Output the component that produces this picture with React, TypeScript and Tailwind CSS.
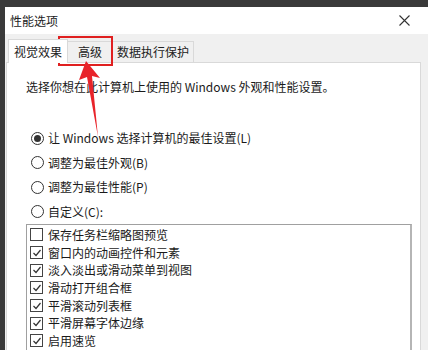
import React from 'react';

const font = { fontFamily: '"Microsoft YaHei", "Noto Sans CJK SC", "Liberation Sans", sans-serif' };

function Radio({ checked, label }: { checked?: boolean; label: React.ReactNode }) {
  return (
    <div className="flex items-center h-[24.5px]">
      <span className="w-[13px] h-[13px] rounded-full border border-[#333] bg-white flex items-center justify-center shrink-0">
        {checked && <span className="w-[7px] h-[7px] rounded-full bg-[#333]" />}
      </span>
      <span className="ml-[4px] text-[12px] text-[#1a1a1a]">{label}</span>
    </div>
  );
}

function Check({ checked, label }: { checked?: boolean; label: string }) {
  return (
    <div className="flex items-center h-[17.7px]">
      <span className="w-[13px] h-[13px] border border-[#444] bg-white flex items-center justify-center shrink-0">
        {checked && (
          <svg width="10" height="10" viewBox="0 0 10 10">
            <path d="M1.5 5 L4 7.5 L8.5 2" fill="none" stroke="#333" strokeWidth="1.2" />
          </svg>
        )}
      </span>
      <span className="ml-[5px] text-[12px] text-[#1a1a1a]">{label}</span>
    </div>
  );
}

export default function App() {
  const items = [
    { label: '保存任务栏缩略图预览', checked: false },
    { label: '窗口内的动画控件和元素', checked: true },
    { label: '淡入淡出或滑动菜单到视图', checked: true },
    { label: '滑动打开组合框', checked: true },
    { label: '平滑滚动列表框', checked: true },
    { label: '平滑屏幕字体边缘', checked: true },
    { label: '启用速览', checked: true },
  ];

  return (
    <div className="relative w-[428px] h-[350px] overflow-hidden bg-[#3a3a3a]" style={font}>
      <div className="absolute left-[5px] top-[7px] w-[423px] h-[343px] flex flex-col bg-[#f0f0f0]">
        {/* title bar */}
        <div className="h-[27px] bg-white flex items-center justify-between pl-[5px] pr-[18px] shrink-0">
          <span className="text-[12px] text-[#222]">性能选项</span>
          <svg width="11" height="11" viewBox="0 0 11 11">
            <path d="M0.5 0.5 L10.5 10.5 M10.5 0.5 L0.5 10.5" stroke="#333" strokeWidth="1.1" />
          </svg>
        </div>

        {/* tabs */}
        <div className="flex items-end h-[28px] pl-[3px] shrink-0">
          <div className="h-[24px] px-[5px] bg-white border border-b-0 border-[#d9d9d9] flex items-center text-[12px] text-[#222] relative z-10 -mb-px">
            视觉效果
          </div>
          <div className="h-[21px] px-[10px] bg-[#f0f0f0] border border-l-0 border-b-0 border-[#d9d9d9] flex items-center text-[12px] text-[#222]">
            高级
          </div>
          <div className="h-[21px] px-[4px] bg-[#f0f0f0] border border-l-0 border-b-0 border-[#d9d9d9] flex items-center text-[12px] text-[#222]">
            数据执行保护
          </div>
        </div>

        {/* tab page */}
        <div className="flex-1 ml-[1px] mr-[7px] bg-white border border-[#d9d9d9] pl-[19px] pr-[8px] pt-[14px]">
          <p className="text-[12px] text-[#1a1a1a] h-[20px] flex items-center">
            选择你想在此计算机上使用的 Windows 外观和性能设置。
          </p>
          <div className="mt-[29px] pl-[5px]">
            <Radio checked label="让 Windows 选择计算机的最佳设置(L)" />
            <Radio label="调整为最佳外观(B)" />
            <Radio label="调整为最佳性能(P)" />
            <Radio label="自定义(C):" />
          </div>
          <div className="h-[200px] border border-[#a0a0a0] border-r-2 border-r-[#b5b5b5] pl-[3px] pt-[1px]">
            {items.map((it) => (
              <Check key={it.label} label={it.label} checked={it.checked} />
            ))}
          </div>
        </div>
      </div>

      {/* red highlight box */}
      <div className="absolute left-[58px] top-[36px] w-[55px] h-[30px] border-2 border-[#e02020]" />

      {/* red arrow */}
      <svg className="absolute left-0 top-0" width="428" height="350" viewBox="0 0 428 350">
        <polygon points="86,61 100,78 92,76 98,137 87,77 79,80" fill="#e8232a" />
      </svg>
    </div>
  );
}
